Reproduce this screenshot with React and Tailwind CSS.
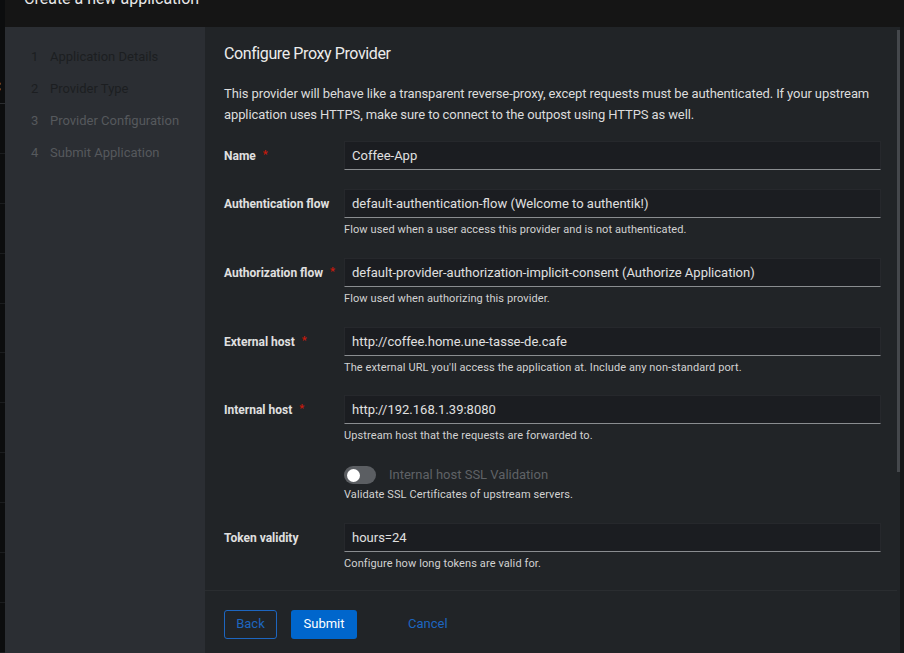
import React from "react";

const ff = { fontFamily: "Roboto, 'Open Sans', sans-serif" };

function Field({ label, required, value, help, mt }) {
  return (
    <div className={`flex ${mt}`}>
      <div className="w-[120px] shrink-0 h-[29px] flex items-center text-[12px] font-bold text-[#e0e0e0]">
        {label}
        {required && <span className="ml-[7px] text-[#c9190b] text-[11px]">*</span>}
      </div>
      <div className="flex-1 flex flex-col">
        <div className="h-[29px] bg-[#1b1d21] border border-[#26282c] border-b-[#8a8d90] flex items-center px-[7px] text-[13px] text-[#e0e0e0]">
          {value}
        </div>
        {help && (
          <div className="text-[11px] leading-[16px] mt-[4px] text-[#d2d2d2] tracking-[0.1px]">{help}</div>
        )}
      </div>
    </div>
  );
}

export default function App() {
  const steps = [
    ["1", "Application Details", "text-[#1c1e21]"],
    ["2", "Provider Type", "text-[#1c1e21]"],
    ["3", "Provider Configuration", "text-[#56595d]"],
    ["4", "Submit Application", "text-[#56595d]"],
  ];
  return (
    <div className="w-[904px] h-[653px] flex bg-[#0c0d0e] overflow-hidden" style={ff}>
      <div className="w-[5px] shrink-0 flex flex-col pt-[75px]">
        <div className="h-[29px] border-b border-[#2a2c2f] text-[#aaa] text-[14px] leading-[24px] -ml-[8px]">C</div>
        {Array.from({ length: 11 }).map((_, i) => (
          <div key={i} className="h-[50px] border-b border-[#1a1c1e]" />
        ))}
      </div>
      <div className="flex-1 flex flex-col">
        <div className="h-[27px] shrink-0 bg-[#151515] overflow-hidden pl-[19px]">
          <div className="text-[16px] leading-[20px] -mt-[11px] text-[#e8e8e8]">Create a new application</div>
        </div>
        <div className="flex-1 flex min-h-0">
          <div className="w-[200px] shrink-0 bg-[#2b2e33] pt-[14px] pl-[26px] flex flex-col">
            {steps.map(([n, t, c]) => (
              <div key={n} className={`h-[32px] flex items-center text-[13px] ${c}`}>
                <span className="w-[19px]">{n}</span>
                <span>{t}</span>
              </div>
            ))}
          </div>
          <div className="flex-1 flex min-w-0">
            <div className="flex-1 flex flex-col bg-[#212427]">
              <div className="flex-1 pl-[19px] pr-[16px] pt-[15px] flex flex-col">
                <div className="text-[16px] leading-[24px] text-[#ececec] tracking-[-0.4px]">Configure Proxy Provider</div>
                <div className="mt-[17px] text-[13px] leading-[21px] text-[#dcdcdc] tracking-[-0.1px]">
                  This provider will behave like a transparent reverse-proxy, except requests must be authenticated. If your upstream application uses HTTPS, make sure to connect to the outpost using HTTPS as well.
                </div>
                <Field mt="mt-[16px]" label="Name" required value="Coffee-App" />
                <Field
                  mt="mt-[19px]"
                  label="Authentication flow"
                  value="default-authentication-flow (Welcome to authentik!)"
                  help="Flow used when a user access this provider and is not authenticated."
                />
                <Field
                  mt="mt-[20px]"
                  label="Authorization flow"
                  required
                  value="default-provider-authorization-implicit-consent (Authorize Application)"
                  help="Flow used when authorizing this provider."
                />
                <Field
                  mt="mt-[20px]"
                  label="External host"
                  required
                  value="http://coffee.home.une-tasse-de.cafe"
                  help="The external URL you'll access the application at. Include any non-standard port."
                />
                <Field
                  mt="mt-[19px]"
                  label="Internal host"
                  required
                  value="http://192.168.1.39:8080"
                  help="Upstream host that the requests are forwarded to."
                />
                <div className="flex mt-[22px]">
                  <div className="w-[120px] shrink-0" />
                  <div className="flex-1 flex flex-col">
                    <div className="flex items-center h-[18px]">
                      <div className="w-[32px] h-[18px] rounded-full bg-[#5b5e62] flex items-center px-[3px]">
                        <div className="w-[13px] h-[13px] rounded-full bg-white" />
                      </div>
                      <span className="ml-[13px] text-[13px] text-[#5f6266]">Internal host SSL Validation</span>
                    </div>
                    <div className="text-[11px] leading-[16px] mt-[3px] text-[#d2d2d2] tracking-[0.1px]">
                      Validate SSL Certificates of upstream servers.
                    </div>
                  </div>
                </div>
                <Field
                  mt="mt-[20px]"
                  label="Token validity"
                  value="hours=24"
                  help="Configure how long tokens are valid for."
                />
              </div>
              <div className="h-[63px] shrink-0 border-t border-[#2a2d30] flex items-center pl-[19px] text-[13px]">
                <button className="h-[29px] w-[53px] border border-[#1d66c0] rounded-[3px] text-[#1d66c0] mt-[4px]">Back</button>
                <button className="h-[29px] w-[66px] ml-[14px] bg-[#0066cc] rounded-[3px] text-white mt-[4px]">Submit</button>
                <button className="h-[29px] ml-[35px] px-[16px] text-[#1d66c0] mt-[4px]">Cancel</button>
              </div>
            </div>
            <div className="w-[3px] shrink-0 bg-[#212427] flex flex-col">
              <div className="h-[3px]" />
              <div className="h-[442px] bg-[#45484c]" />
            </div>
            <div className="w-[4px] shrink-0 bg-[#161718]" />
          </div>
        </div>
      </div>
    </div>
  );
}
